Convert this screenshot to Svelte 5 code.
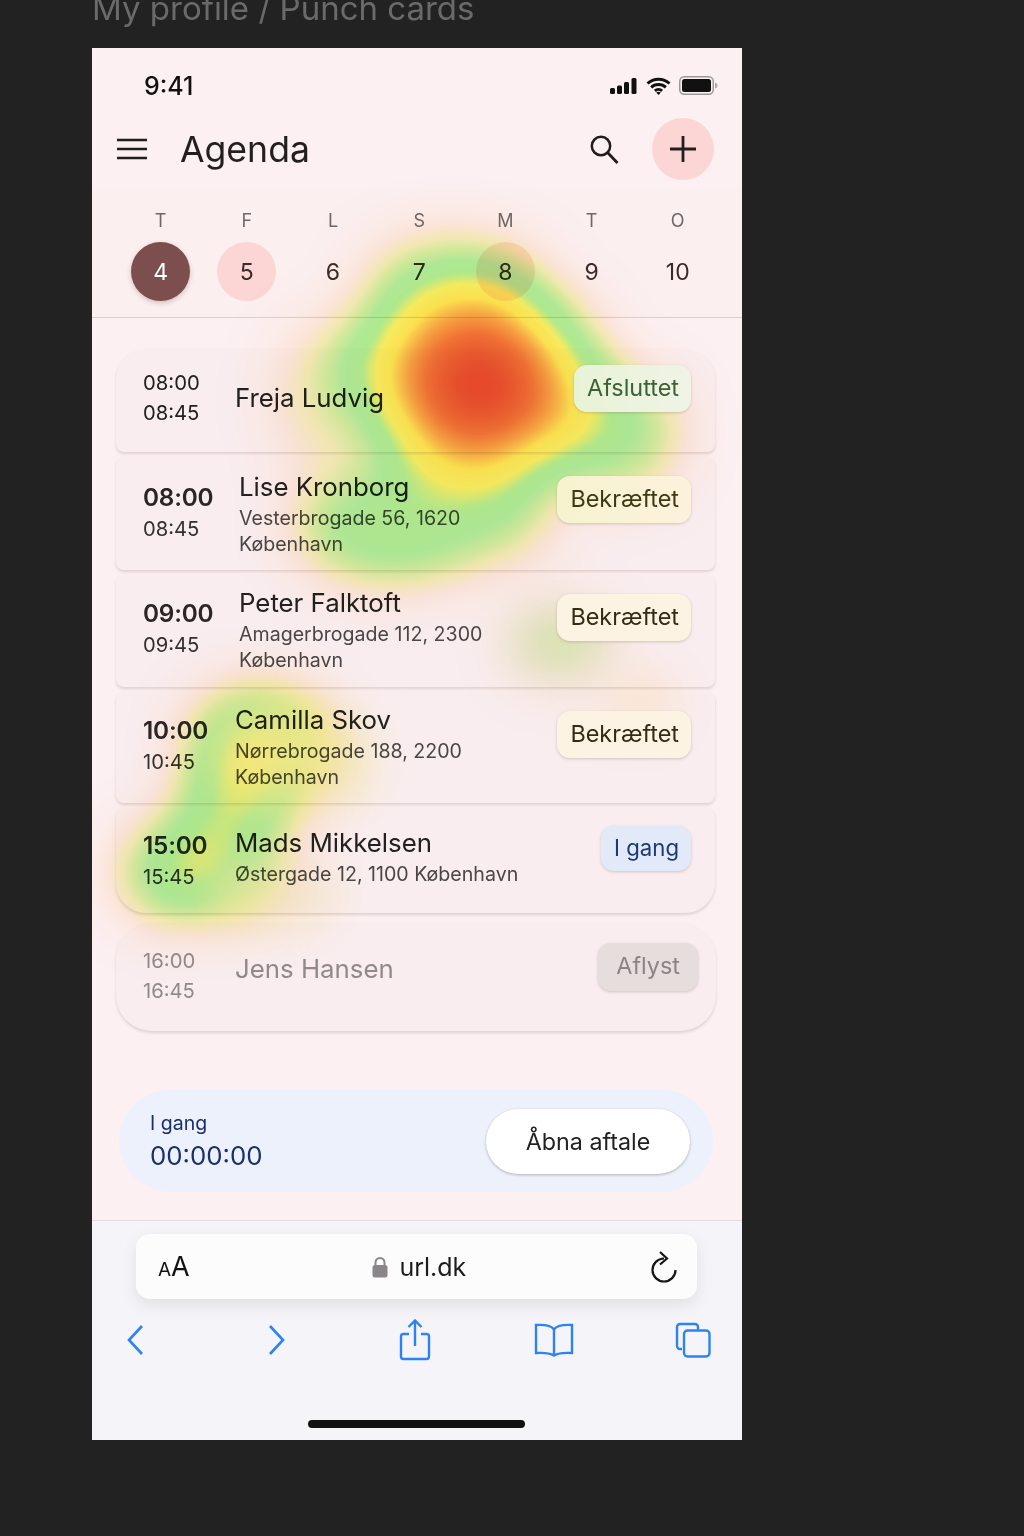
<script>
  const stops = [
    [0, 255, 255, 255], [0.05, 255, 250, 244], [0.1, 255, 244, 230], [0.17, 248, 248, 190], [0.24, 215, 248, 165],
    [0.33, 178, 248, 158], [0.43, 178, 248, 150], [0.52, 250, 250, 100], [0.62, 255, 240, 85],
    [0.72, 250, 175, 70], [0.82, 243, 120, 55], [0.92, 236, 85, 48], [1, 232, 66, 42]
  ];
  function table(ch) {
    const out = [];
    for (let i = 0; i <= 50; i++) {
      const t = i / 50;
      let k = 0;
      while (k < stops.length - 2 && stops[k + 1][0] < t) k++;
      const a = stops[k], b = stops[k + 1];
      const f = Math.min(1, Math.max(0, (t - a[0]) / (b[0] - a[0])));
      out.push(((a[ch] + (b[ch] - a[ch]) * f) / 255).toFixed(3));
    }
    return out.join(' ');
  }
  const tables = { r: table(1), g: table(2), b: table(3) };

  const blobs = [
    [388, 338, 42, 40, 0.85],
    [388, 338, 80, 72, 0.75],
    [388, 338, 125, 110, 0.5],
    [360, 232, 85, 40, 0.34],
    [285, 300, 50, 45, 0.22],
    [330, 470, 130, 50, 0.34],
    [290, 500, 80, 40, 0.2],
    [525, 385, 60, 60, 0.36],
    [225, 350, 40, 70, 0.2],
    [468, 595, 50, 35, 0.2],
    [545, 655, 30, 20, 0.1],
    [165, 690, 66, 48, 0.48],
    [150, 745, 62, 38, 0.44],
    [85, 825, 55, 45, 0.48],
    [130, 790, 55, 28, 0.32],
    [155, 835, 60, 30, 0.26]
  ];

  const washes = [
    [190, 705, 66, 52, '#f8f88c', 0.9],
    [250, 715, 34, 48, '#f3f6b4', 0.45],
    [146, 842, 28, 34, '#f2f59a', 0.75],
    [200, 850, 50, 26, '#f4f6c0', 0.5],
    [466, 594, 48, 30, '#cdf3b4', 0.7],
    [548, 652, 34, 20, '#fff2bc', 0.5]
  ];

  const days = [['T', '4', 'active'], ['F', '5', 'today'], ['L', '6', ''], ['S', '7', ''], ['M', '8', 'today'], ['T', '9', ''], ['O', '10', '']];

  const cards = [
    { cls: 'first compact', a: '08:00', b: '08:45', name: 'Freja Ludvig', status: 'Afsluttet', tone: 'done' },
    { cls: 'wide tall', a: '08:00', b: '08:45', name: 'Lise Kronborg', addr: 'Vesterbrogade 56, 1620 København', status: 'Bekræftet', tone: 'ok warm' },
    { cls: 'wide', a: '09:00', b: '09:45', name: 'Peter Falktoft', addr: 'Amagerbrogade 112, 2300 København', status: 'Bekræftet', tone: 'ok' },
    { cls: '', a: '10:00', b: '10:45', name: 'Camilla Skov', addr: 'Nørrebrogade 188, 2200 København', status: 'Bekræftet', tone: 'ok' },
    { cls: 'last', a: '15:00', b: '15:45', name: 'Mads Mikkelsen', addr: 'Østergade 12, 1100 København', status: 'I gang', tone: 'live' },
    { cls: 'compact cancelled', a: '16:00', b: '16:45', name: 'Jens Hansen', status: 'Aflyst', tone: 'off' }
  ];
</script>

<div class="page">
  <h1>My profile / Punch cards</h1>
  <div class="phone">
    <div class="status">
      <span class="clock">9:41</span>
      <div class="sys">
        <svg width="29" height="16" viewBox="0 0 29 16"><rect x="1" y="10" width="5" height="6" rx="1.5"/><rect x="8" y="7.5" width="5" height="8.5" rx="1.5"/><rect x="15" y="4" width="5" height="12" rx="1.5"/><rect x="22.5" y="0" width="5" height="16" rx="1.5"/></svg>
        <svg width="25" height="18" viewBox="0 0 25 18"><path d="M1.5 6.5C7.5.8 17.500.8 23.500 6.500M5.200 10.300c3.900-3.600 10.700-3.600 14.600 0M8.900 13.800c2-1.700 5.200-1.700 7.200 0" fill="none" stroke="#111" stroke-width="3"/><path d="M12.500 18l-2.300-2.600c1.300-1 3.300-1 4.600 0z"/></svg>
        <svg width="39" height="19" viewBox="0 0 39 19"><rect x="0.750" y="0.750" width="33.500" height="17.500" rx="4.500" fill="none" stroke="#999" stroke-width="1.500"/><rect x="3" y="3" width="29" height="13" rx="2.500"/><path d="M36 6.500c1.500.5 2.500 1.500 2.500 3s-1 2.500-2.500 3z" fill="#aaa"/></svg>
      </div>
    </div>

    <header class="bar">
      <svg class="menu" width="32" height="22" viewBox="0 0 32 22"><path d="M1 2h30M1 11h30M1 20h30" stroke="#1f1d1d" stroke-width="2.600" fill="none"/></svg>
      <span class="title">Agenda</span>
      <svg class="search" width="30" height="30" viewBox="0 0 30 30"><circle cx="12" cy="12" r="9.200" fill="none" stroke="#1f1d1d" stroke-width="2.500"/><path d="M18.500 18.500l10 10.500" stroke="#1f1d1d" stroke-width="2.800" fill="none"/></svg>
      <div class="add"><svg width="28" height="28" viewBox="0 0 28 28"><path d="M14 1v26M1 14h26" stroke="#231f1f" stroke-width="2.800" fill="none"/></svg></div>
    </header>

    <section class="week">
      {#each days as d}
        <div class="day">
          <span class="letter">{d[0]}</span>
          <span class="num {d[2]}">{d[1]}</span>
        </div>
      {/each}
    </section>

    <main class="list">
      {#each cards as c}
        <article class="card {c.cls}">
          <div class="times">
            <span class="start">{c.a}</span>
            <span class="end">{c.b}</span>
          </div>
          <div class="info">
            <span class="name">{c.name}</span>
            {#if c.addr}<span class="addr">{c.addr}</span>{/if}
          </div>
          <span class="badge {c.tone}">{c.status}</span>
        </article>
      {/each}
    </main>

    <div class="banner">
      <div class="timer">
        <span class="tlabel">I gang</span>
        <span class="tvalue">00:00:00</span>
      </div>
      <button class="open">Åbna aftale</button>
    </div>

    <footer class="safari">
      <div class="url">
        <span class="aa"><small>A</small>A</span>
        <span class="addrbar">
          <svg width="16" height="22" viewBox="0 0 16 22"><path d="M3.500 10V6.500a4.500 4.500 0 0 1 9 0V10" fill="none" stroke="#8a8588" stroke-width="2"/><rect x="0.500" y="9" width="15" height="12.500" rx="2.500" fill="#8a8588"/></svg>
          url.dk
        </span>
        <svg width="28" height="32" viewBox="0 0 28 32"><path d="M14 6.500a11.500 11.500 0 1 0 11.500 11.500" fill="none" stroke="#151515" stroke-width="2.200" transform="translate(1 1)"/><path d="M11 1l7 6.500-7 6" fill="none" stroke="#151515" stroke-width="2.200"/></svg>
      </div>
      <nav class="tools">
        <svg width="20" height="32" viewBox="0 0 20 32"><path d="M16 2L3 16l13 14" fill="none" stroke="#2c84f2" stroke-width="2.600"/></svg>
        <svg width="20" height="32" viewBox="0 0 20 32"><path d="M5 2l13 14L5 30" fill="none" stroke="#2c84f2" stroke-width="2.600"/></svg>
        <svg width="32" height="42" viewBox="0 0 32 42"><path d="M10 15H4.500A2.500 2.500 0 0 0 2 17.500v20A2.500 2.500 0 0 0 4.500 40h23a2.500 2.500 0 0 0 2.500-2.500v-20a2.500 2.500 0 0 0-2.500-2.500H22M16 27V2M9.500 8L16 1.500 22.500 8" fill="none" stroke="#2c84f2" stroke-width="2.400"/></svg>
        <svg width="40" height="34" viewBox="0 0 40 34"><path d="M20 6.500C17.500 2.500 11 1.500 2 2v28c8-.5 14 0 18 2.500 4-2.500 10-3 18-2.500V2C29 1.500 22.500 2.500 20 6.500zV32" fill="none" stroke="#2c84f2" stroke-width="2.400"/></svg>
        <svg width="36" height="36" viewBox="0 0 36 36"><path d="M7 27H5a3 3 0 0 1-3-3V5a3 3 0 0 1 3-3h15a3 3 0 0 1 3 3v3" fill="none" stroke="#2c84f2" stroke-width="2.400"/><rect x="9" y="8.500" width="25.500" height="26" rx="3.500" fill="none" stroke="#2c84f2" stroke-width="2.400"/></svg>
      </nav>
      <div class="home"></div>
    </footer>

    <svg class="heat" width="650" height="1392" viewBox="0 0 650 1392" aria-hidden="true">
      <defs>
        <filter id="heatmap" filterUnits="userSpaceOnUse" x="0" y="0" width="650" height="1392" color-interpolation-filters="sRGB">
          <feGaussianBlur stdDeviation="30"/>
          <feColorMatrix type="matrix" values="0 0 0 1 0  0 0 0 1 0  0 0 0 1 0  0 0 0 0 1"/>
          <feComponentTransfer>
            <feFuncR type="table" tableValues={tables.r}/>
            <feFuncG type="table" tableValues={tables.g}/>
            <feFuncB type="table" tableValues={tables.b}/>
          </feComponentTransfer>
        </filter>
        <filter id="wash" filterUnits="userSpaceOnUse" x="0" y="0" width="650" height="1392" color-interpolation-filters="sRGB">
          <feGaussianBlur stdDeviation="22"/>
        </filter>
      </defs>
      <g filter="url(#heatmap)">
        {#each blobs as b}
          <ellipse cx={b[0]} cy={b[1]} rx={b[2]} ry={b[3]} fill="#fff" fill-opacity={b[4]}/>
        {/each}
      </g>
      <g filter="url(#wash)">
        {#each washes as w}
          <ellipse cx={w[0]} cy={w[1]} rx={w[2]} ry={w[3]} fill={w[4]} fill-opacity={w[5]}/>
        {/each}
      </g>
    </svg>
  </div>
</div>

<style>
  :global(body) {
    margin: 0;
    background: #222222;
  }
  .page {
    height: 1536px;
    overflow: hidden;
    padding-left: 92px;
    font-family: Inter, "Liberation Sans", sans-serif;
    color: #222020;
  }
  h1 {
    margin: -12px 0 0;
    height: 60px;
    line-height: 40px;
    font-size: 33px;
    font-weight: 400;
    color: #6b6a6a;
    white-space: nowrap;
  }
  .phone {
    position: relative;
    width: 650px;
    height: 1392px;
    background: #fcf0f2;
    display: flex;
    flex-direction: column;
    overflow: hidden;
  }
  .status {
    height: 63px;
    flex: none;
    display: flex;
    align-items: center;
    justify-content: space-between;
    padding: 12px 24px 0 52px;
    box-sizing: border-box;
  }
  .clock {
    font-size: 25px;
    font-weight: 500;
    color: #111;
  }
  .sys {
    display: flex;
    align-items: center;
    gap: 8px;
  }
  .sys svg {
    fill: #111;
  }
  .bar {
    height: 78px;
    box-sizing: border-box;
    flex: none;
    display: flex;
    align-items: center;
    padding: 0 28px 2px 24px;
  }
  .title {
    margin-left: 32px;
    font-size: 35.600px;
    color: #231f1f;
    flex: 1;
  }
  .search {
    margin-right: 33px;
  }
  .add {
    width: 62px;
    height: 62px;
    border-radius: 50%;
    background: #fbd6d4;
    display: flex;
    align-items: center;
    justify-content: center;
  }
  .week {
    flex: none;
    height: 129px;
    box-sizing: border-box;
    background: #fbeff0;
    border-bottom: 1px solid #d9cfd0;
    display: grid;
    grid-template-columns: repeat(7, 86.200px);
    padding: 20px 0 0 25.500px;
  }
  .day {
    display: flex;
    flex-direction: column;
    align-items: center;
    gap: 9px;
  }
  .letter {
    font-size: 18px;
    line-height: 24px;
    color: #6f6869;
  }
  .num {
    width: 59px;
    height: 59px;
    border-radius: 50%;
    display: flex;
    align-items: center;
    justify-content: center;
    font-size: 23px;
    color: #3a2a2a;
  }
  .num.active {
    background: #7d4e4e;
    color: #fff;
    box-shadow: 0 2px 5px rgba(90, 50, 50, 0.25);
  }
  .num.today {
    background: #fbd6d4;
  }
  .list {
    flex: none;
    display: flex;
    flex-direction: column;
    gap: 5px;
    padding: 31px 27px 0 24px;
  }
  .card {
    display: flex;
    align-items: flex-start;
    height: 111px;
    padding: 11px 24px 0 27px;
    box-sizing: border-box;
    background: #f9edef;
    border-radius: 8px;
    box-shadow: 0 2px 3px rgba(130, 100, 100, 0.22);
  }
  .card.first {
    height: 103px;
    border-radius: 30px 30px 8px 8px;
    padding-top: 19px;
  }
  .card.last {
    height: 105px;
    border-radius: 8px 8px 30px 30px;
    padding-top: 16px;
  }
  .card.wide {
    height: 112px;
  }
  .card.tall {
    height: 113px;
    padding-top: 12.500px;
  }
  .card.cancelled {
    height: 108px;
    margin-top: 5px;
    margin-right: -1px;
    padding: 20px 18px 0 27px;
    border-radius: 36px;
    color: #908a8b;
  }
  .times {
    width: 92px;
    flex: none;
    display: flex;
    flex-direction: column;
    padding-top: 10px;
  }
  .wide .times {
    width: 96px;
  }
  .last .times {
    padding-top: 4px;
  }
  .start {
    font-size: 24.300px;
    line-height: 34px;
    font-weight: 600;
    letter-spacing: -0.200px;
    color: #2a2626;
  }
  .end {
    font-size: 20.200px;
    line-height: 30px;
    color: #333030;
  }
  .compact .times {
    padding-top: 0;
  }
  .cancelled .times {
    padding-top: 3px;
  }
  .compact .start {
    font-size: 20.300px;
    line-height: 29.500px;
    font-weight: 400;
    letter-spacing: 0;
    color: inherit;
  }
  .compact .end {
    line-height: 29.500px;
    color: inherit;
  }
  .info {
    flex: 1;
    min-width: 0;
    display: flex;
    flex-direction: column;
    margin-top: -1px;
  }
  .last .info {
    margin-top: 1px;
  }
  .compact .info {
    margin-top: 0;
    padding-top: 12px;
  }
  .cancelled .info {
    padding-top: 8px;
  }
  .name {
    font-size: 25.800px;
    line-height: 36px;
    color: inherit;
  }
  .addr {
    max-width: 290px;
    font-size: 19.600px;
    line-height: 26px;
    color: #4a4646;
  }
  .last .addr {
    max-width: none;
  }
  .badge {
    position: relative;
    z-index: 2;
    flex: none;
    margin-top: 8px;
    padding: 0 12px 0 13px;
    height: 47px;
    line-height: 45px;
    box-sizing: border-box;
    border-radius: 13px;
    font-size: 23.400px;
    box-shadow: 0 1px 3px rgba(120, 100, 90, 0.3);
  }
  .tall .badge {
    margin-top: 6.500px;
  }
  .last .badge {
    margin-top: 2px;
    height: 45px;
    line-height: 43px;
    font-size: 22.200px;
  }
  .first .badge {
    margin-top: -3px;
  }
  .done {
    background: linear-gradient(90deg, #e8f3d6, #f0f3e6);
    color: #3c6238;
  }
  .ok {
    background: #fdf3e2;
    color: #332b14;
  }
  .warm {
    background: linear-gradient(90deg, #f6f3cf, #fdf1dc);
    color: #3b3a14;
  }
  .live {
    background: #e2eafa;
    color: #1b3a78;
  }
  .off {
    background: #e6dddd;
    color: #8a8484;
    padding: 0 18px;
    height: 48px;
  }
  .cancelled .badge {
    margin-top: 0;
  }
  .banner {
    flex: none;
    margin: 59px 29px 0 27px;
    height: 102px;
    border-radius: 51px;
    background: #edf1fb;
    display: flex;
    align-items: center;
    justify-content: space-between;
    padding: 0 23px 0 31px;
  }
  .timer {
    display: flex;
    flex-direction: column;
    color: #1b2f6b;
    gap: 2px;
  }
  .tlabel {
    font-size: 19.500px;
    line-height: 28px;
  }
  .tvalue {
    font-size: 25.800px;
    line-height: 34px;
  }
  .open {
    width: 204px;
    height: 65px;
    border-radius: 33px;
    background: #fff;
    border: none;
    box-shadow: 0 1px 3px rgba(90, 80, 80, 0.4);
    font: 400 23.300px Inter, "Liberation Sans", sans-serif;
    color: #222;
  }
  .safari {
    flex: 1;
    margin-top: 28px;
    background: #f5f4f8;
    border-top: 1px solid #e0dde0;
    display: flex;
    flex-direction: column;
    position: relative;
  }
  .url {
    margin: 13px 45px 0 44px;
    height: 65px;
    flex: none;
    border-radius: 14px;
    background: #fdfcfd;
    box-shadow: 0 6px 16px rgba(60, 50, 60, 0.1);
    display: flex;
    align-items: center;
    justify-content: space-between;
    padding: 0 20px 0 22px;
  }
  .aa {
    font-size: 27px;
    color: #111;
  }
  .aa small {
    font-size: 19px;
  }
  .addrbar {
    display: flex;
    align-items: center;
    gap: 11px;
    font-size: 25px;
    color: #1d1b1b;
  }
  .tools {
    margin-top: 18px;
    padding: 0 29px 0 24px;
    display: flex;
    align-items: center;
    justify-content: space-between;
    height: 46px;
  }
  .tools svg {
    width: 40px;
  }
  .home {
    position: absolute;
    left: 216px;
    bottom: 12px;
    width: 217px;
    height: 8px;
    border-radius: 4px;
    background: #111;
  }
  .heat {
    position: absolute;
    left: 0;
    top: 0;
    z-index: 1;
    mix-blend-mode: multiply;
    pointer-events: none;
  }
</style>
